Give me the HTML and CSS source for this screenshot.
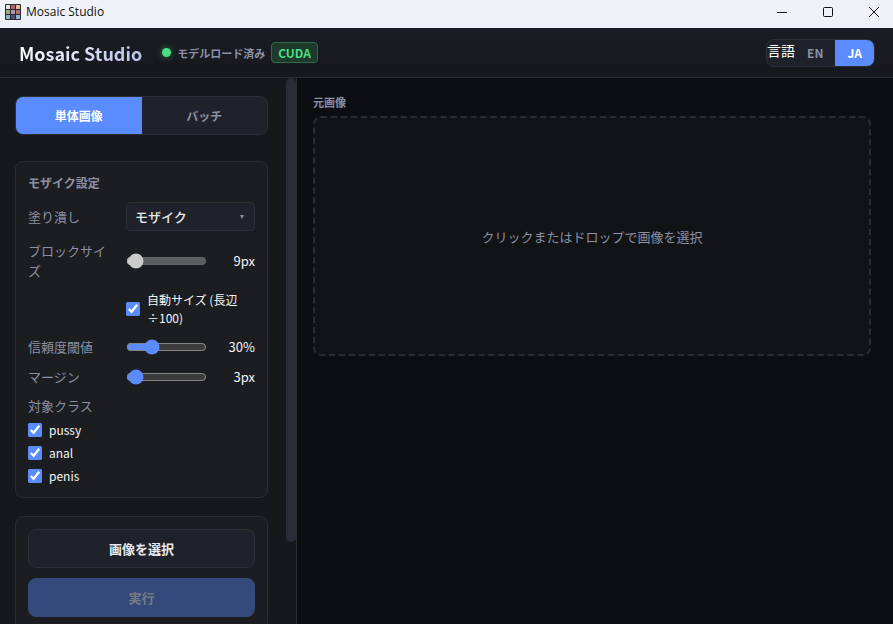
FILE: index.html
```html
<!DOCTYPE html>
<html lang="ja">
<head>
    <meta charset="UTF-8">
    <meta name="viewport" content="width=device-width, initial-scale=1.0">
    <title>Mosaic Studio</title>
    <link rel="stylesheet" href="styles.css">
</head>
<body>
    <div class="titlebar">
        <svg class="app-icon" width="16" height="16" viewBox="0 0 16 16" aria-hidden="true">
            <rect width="16" height="16" rx="1" fill="#2b2a33"/>
            <rect x="1" y="1" width="4" height="4" fill="#e9e4e4"/>
            <rect x="6" y="1" width="4" height="4" fill="#b4616b"/>
            <rect x="11" y="1" width="4" height="4" fill="#e3bd93"/>
            <rect x="1" y="6" width="4" height="4" fill="#9dac7c"/>
            <rect x="6" y="6" width="4" height="4" fill="#a893b4"/>
            <rect x="11" y="6" width="4" height="4" fill="#b66d70"/>
            <rect x="1" y="11" width="4" height="4" fill="#84b9c9"/>
            <rect x="6" y="11" width="4" height="4" fill="#4d5068"/>
            <rect x="11" y="11" width="4" height="4" fill="#8cb8c6"/>
        </svg>
        <span class="window-title">Mosaic Studio</span>
        <div class="window-buttons">
            <button type="button" aria-label="最小化">
                <svg width="12" height="12" viewBox="0 0 12 12"><path d="M1 6.5h10"/></svg>
            </button>
            <button type="button" aria-label="最大化">
                <svg width="12" height="12" viewBox="0 0 12 12"><rect x="1.5" y="1.5" width="9" height="9" rx="1"/></svg>
            </button>
            <button type="button" aria-label="閉じる">
                <svg width="12" height="12" viewBox="0 0 12 12"><path d="M1 1l10 10M11 1L1 11"/></svg>
            </button>
        </div>
    </div>

    <header class="header">
        <h1>Mosaic Studio</h1>
        <div class="status">
            <span class="status-dot"></span>
            <span class="status-text">モデルロード済み</span>
            <span class="badge">CUDA</span>
        </div>
        <div class="lang-switch">
            <span class="lang-label">言語</span>
            <button type="button">EN</button>
            <button type="button" class="active">JA</button>
        </div>
    </header>

    <div class="layout">
        <aside class="sidebar">
            <div class="sidebar-content">
                <div class="tabs">
                    <button type="button" class="active">単体画像</button>
                    <button type="button">バッチ</button>
                </div>

                <section class="card">
                    <h2>モザイク設定</h2>
                    <div class="settings">
                        <div class="row">
                            <label for="fill">塗り潰し</label>
                            <div class="select-wrap">
                                <select id="fill">
                                    <option>モザイク</option>
                                </select>
                            </div>
                        </div>
                        <div class="row">
                            <label for="block">ブロックサイズ</label>
                            <div class="slider">
                                <input type="range" id="block" min="2" max="200" value="9" disabled>
                                <output for="block">9px</output>
                            </div>
                        </div>
                        <div class="row">
                            <label class="check auto-size">
                                <input type="checkbox" checked>
                                <span>自動サイズ (長辺÷100)</span>
                            </label>
                        </div>
                        <div class="row">
                            <label for="conf">信頼度閾値</label>
                            <div class="slider">
                                <input type="range" id="conf" min="5" max="95" value="30">
                                <output for="conf">30%</output>
                            </div>
                        </div>
                        <div class="row">
                            <label for="margin">マージン</label>
                            <div class="slider">
                                <input type="range" id="margin" min="0" max="100" value="3">
                                <output for="margin">3px</output>
                            </div>
                        </div>
                        <fieldset class="classes">
                            <legend>対象クラス</legend>
                            <label class="check"><input type="checkbox" checked><span>pussy</span></label>
                            <label class="check"><input type="checkbox" checked><span>anal</span></label>
                            <label class="check"><input type="checkbox" checked><span>penis</span></label>
                        </fieldset>
                    </div>
                </section>

                <section class="card actions">
                    <button type="button" class="btn">画像を選択</button>
                    <button type="button" class="btn primary" disabled>実行</button>
                </section>
            </div>
            <div class="scrollbar"><div class="thumb"></div></div>
        </aside>

        <main class="main">
            <h2>元画像</h2>
            <button type="button" class="dropzone">クリックまたはドロップで画像を選択</button>
        </main>
    </div>
</body>
</html>
```
FILE: styles.css
```css
* {
    box-sizing: border-box;
}

body {
    margin: 0;
    height: 100vh;
    display: flex;
    flex-direction: column;
    overflow: hidden;
    background: #0d0e12;
    color: #e8e9ed;
    font-family: "Noto Sans CJK JP", "Noto Sans", sans-serif;
    font-size: 13px;
    line-height: 20px;
}

button,
select,
input {
    font-family: inherit;
    margin: 0;
}

h1,
h2 {
    margin: 0;
}

/* Window title bar */
.titlebar {
    flex: none;
    display: flex;
    align-items: center;
    height: 28px;
    padding: 0 0 4px 5px;
    background: #eff3f9;
    color: #111;
    font-family: "Open Sans", sans-serif;
    font-size: 12px;
    overflow: hidden;
}

.window-title {
    margin-left: 5px;
}

.window-buttons {
    display: flex;
    margin-left: auto;
    margin-right: -4px;
}

.window-buttons button {
    display: flex;
    align-items: center;
    justify-content: center;
    width: 46px;
    height: 24px;
    padding: 0;
    border: none;
    background: none;
}

.window-buttons svg {
    fill: none;
    stroke: #111;
}

/* Header */
.header {
    flex: none;
    display: flex;
    align-items: center;
    height: 50px;
    padding: 0 18px 0 19px;
    background: linear-gradient(#1a1d25, #17181c);
    border-bottom: 1px solid #2c2d33;
}

.header h1 {
    font-size: 18px;
    font-weight: 600;
    line-height: 26px;
    background: linear-gradient(135deg, #fff, #b4c0e8);
    background-clip: text;
    -webkit-background-clip: text;
    color: transparent;
}

.status {
    display: flex;
    align-items: center;
    gap: 6px;
    margin-left: 20px;
    color: #8b90a5;
    font-size: 11px;
    font-weight: 600;
}

.status-dot {
    width: 9px;
    height: 9px;
    border-radius: 50%;
    background: #4ade80;
    box-shadow: 0 0 6px rgba(74, 222, 128, 0.5);
}

.badge {
    padding: 0 6px;
    border: 1px solid #2d6c49;
    border-radius: 4px;
    background: #1e3a2d;
    color: #4ade80;
    font-size: 12px;
    line-height: 19px;
}

.lang-switch {
    display: flex;
    margin-left: auto;
    height: 28px;
    border: 1px solid #2c2f38;
    border-radius: 8px;
    background: #1f222a;
    overflow: hidden;
}

.lang-label {
    color: #fff;
    font-size: 14px;
    line-height: 20px;
}

.lang-switch button {
    padding: 0 12px;
    border: none;
    background: none;
    color: #8b90a5;
    font-size: 12px;
    font-weight: 600;
}

.lang-switch .active,
.tabs .active {
    background: #5b8cff;
    color: #fff;
}

/* Layout */
.layout {
    flex: 1;
    min-height: 0;
    display: flex;
}

.sidebar {
    flex: none;
    display: flex;
    width: 297px;
    background: #17181c;
    border-right: 1px solid #2c2d33;
}

.sidebar-content {
    flex: 1;
    padding: 18px 18px 18px 15px;
    overflow: hidden;
}

.scrollbar {
    width: 10px;
}

.thumb {
    height: 85%;
    border-radius: 5px;
    background: #2a2d38;
}

.tabs {
    display: flex;
    height: 39px;
    margin-bottom: 26px;
    border: 1px solid #2c2f38;
    border-radius: 8px;
    background: #1f222a;
    overflow: hidden;
}

.tabs button {
    flex: 1;
    padding: 0;
    border: none;
    background: none;
    color: #8b90a5;
    font-size: 12px;
    font-weight: 600;
}

.tabs .active {
    background: #5b8cff;
    color: #fff;
}

.card {
    margin-bottom: 18px;
    padding: 12px;
    border: 1px solid #2c2d33;
    border-radius: 8px;
    background: #1c1d20;
}

.card h2,
.main h2 {
    color: #8b90a5;
    font-size: 11px;
    font-weight: 600;
    line-height: 16px;
}

.card h2 {
    margin-bottom: 10px;
    font-size: 12px;
    line-height: 18px;
}

.settings {
    display: flex;
    flex-direction: column;
    gap: 10px;
}

.row {
    display: grid;
    grid-template-columns: 88px 1fr;
    gap: 10px;
    align-items: center;
    color: #8b90a5;
}

.select-wrap {
    position: relative;
}

.select-wrap::after {
    content: "";
    position: absolute;
    top: 13px;
    right: 11px;
    border: 2px solid transparent;
    border-top: 4px solid #8b90a5;
    border-bottom: none;
}

select {
    display: block;
    width: 100%;
    height: 29px;
    padding: 0 8px;
    appearance: none;
    border: 1px solid #2c2f38;
    border-radius: 4px;
    background: #1f222a;
    color: #e8e9ed;
    font-size: 13px;
    font-weight: 500;
}

.slider {
    display: flex;
    align-items: center;
    justify-content: space-between;
}

.slider input {
    width: 81px;
    height: 16px;
    accent-color: #5b8cff;
}

.slider output {
    color: #f4f5f8;
}

.check {
    display: flex;
    align-items: center;
    gap: 7px;
    color: #f4f5f8;
    font-size: 12px;
    line-height: 18px;
}

.check input {
    flex: none;
    width: 14px;
    height: 14px;
    accent-color: #5b8cff;
}

.auto-size {
    grid-column: 2;
}

.classes {
    display: flex;
    flex-direction: column;
    gap: 5px;
    margin: 0;
    padding: 0;
    border: none;
}

.classes legend {
    margin-bottom: 6px;
    padding: 0;
    color: #8b90a5;
    line-height: 18px;
}

/* Action buttons */
.actions {
    display: flex;
    flex-direction: column;
    gap: 10px;
}

.btn {
    height: 39px;
    border: 1px solid #2c2f38;
    border-radius: 8px;
    background: #1f222a;
    color: #e8e9ed;
    font-size: 13px;
    font-weight: 600;
}

.btn.primary {
    border-color: #354a7c;
    background: #354a7c;
    color: #777a82;
}

/* Image area */
.main {
    flex: 1;
    padding: 16px 22px 16px 16px;
}

.main h2 {
    margin-bottom: 6px;
}

.dropzone {
    display: block;
    width: 100%;
    height: 240px;
    border: 2px dashed #2c2d33;
    border-radius: 8px;
    background: #121317;
    color: #8b90a5;
    font-size: 13px;
}
```
